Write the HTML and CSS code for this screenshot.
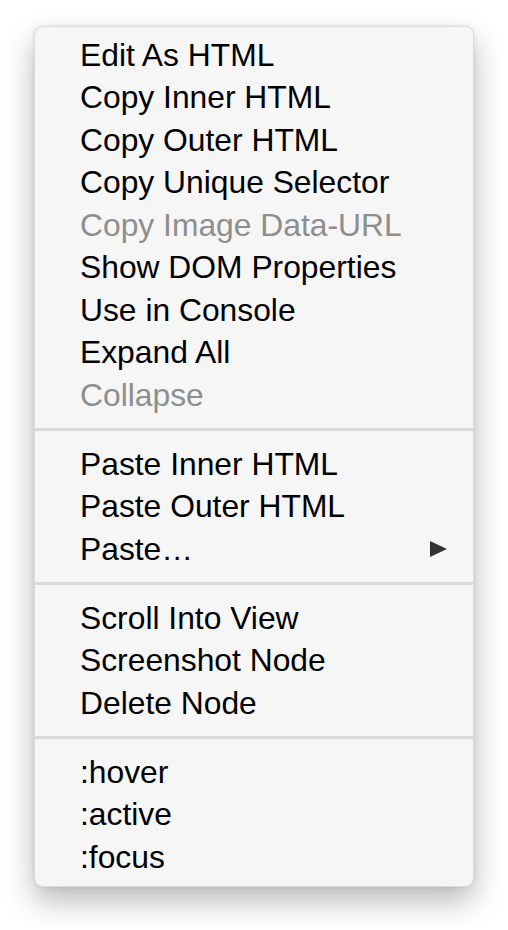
FILE: index.html
```html
<!DOCTYPE html>
<html lang="en">
<head>
<meta charset="utf-8">
<title>Context menu</title>
<link rel="stylesheet" href="styles.css">
</head>
<body>
<div class="menu">
  <ul class="group">
    <li class="item">Edit As HTML</li>
    <li class="item">Copy Inner HTML</li>
    <li class="item">Copy Outer HTML</li>
    <li class="item">Copy Unique Selector</li>
    <li class="item disabled">Copy Image Data-URL</li>
    <li class="item">Show DOM Properties</li>
    <li class="item">Use in Console</li>
    <li class="item">Expand All</li>
    <li class="item disabled">Collapse</li>
  </ul>
  <div class="sep"></div>
  <ul class="group">
    <li class="item">Paste Inner HTML</li>
    <li class="item">Paste Outer HTML</li>
    <li class="item submenu"><span>Paste…</span><span class="arrow"></span></li>
  </ul>
  <div class="sep"></div>
  <ul class="group">
    <li class="item">Scroll Into View</li>
    <li class="item">Screenshot Node</li>
    <li class="item">Delete Node</li>
  </ul>
  <div class="sep"></div>
  <ul class="group">
    <li class="item">:hover</li>
    <li class="item">:active</li>
    <li class="item">:focus</li>
  </ul>
</div>
</body>
</html>
```
FILE: styles.css
```css
html, body {
  margin: 0;
  padding: 0;
  background: #ffffff;
}
body {
  font-family: "Liberation Sans", Arial, Helvetica, sans-serif;
  padding: 26px 0 40px 34px;
}
.menu {
  width: 438px;
  box-sizing: content-box;
  background: #f6f6f6;
  border: 1px solid #dcdcdc;
  border-radius: 9px;
  padding: 6.75px 0 8px;
  box-shadow: 0 14px 30px rgba(0, 0, 0, 0.28), 0 0 4px rgba(0, 0, 0, 0.1);
}
.group {
  list-style: none;
  margin: 0;
  padding: 0;
}
.item {
  font-size: 31.8px;
  line-height: 42.5px;
  height: 42.5px;
  color: #000;
  padding: 0 26px 0 45px;
  white-space: nowrap;
}
.item.disabled {
  color: #8e8e8e;
}
.submenu {
  display: flex;
  align-items: center;
  justify-content: space-between;
}
.arrow {
  width: 0;
  height: 0;
  border-top: 8px solid transparent;
  border-bottom: 8px solid transparent;
  border-left: 17px solid #333;
}
.sep {
  height: 3px;
  background: #dadada;
  margin: 11.75px 0;
}
```
